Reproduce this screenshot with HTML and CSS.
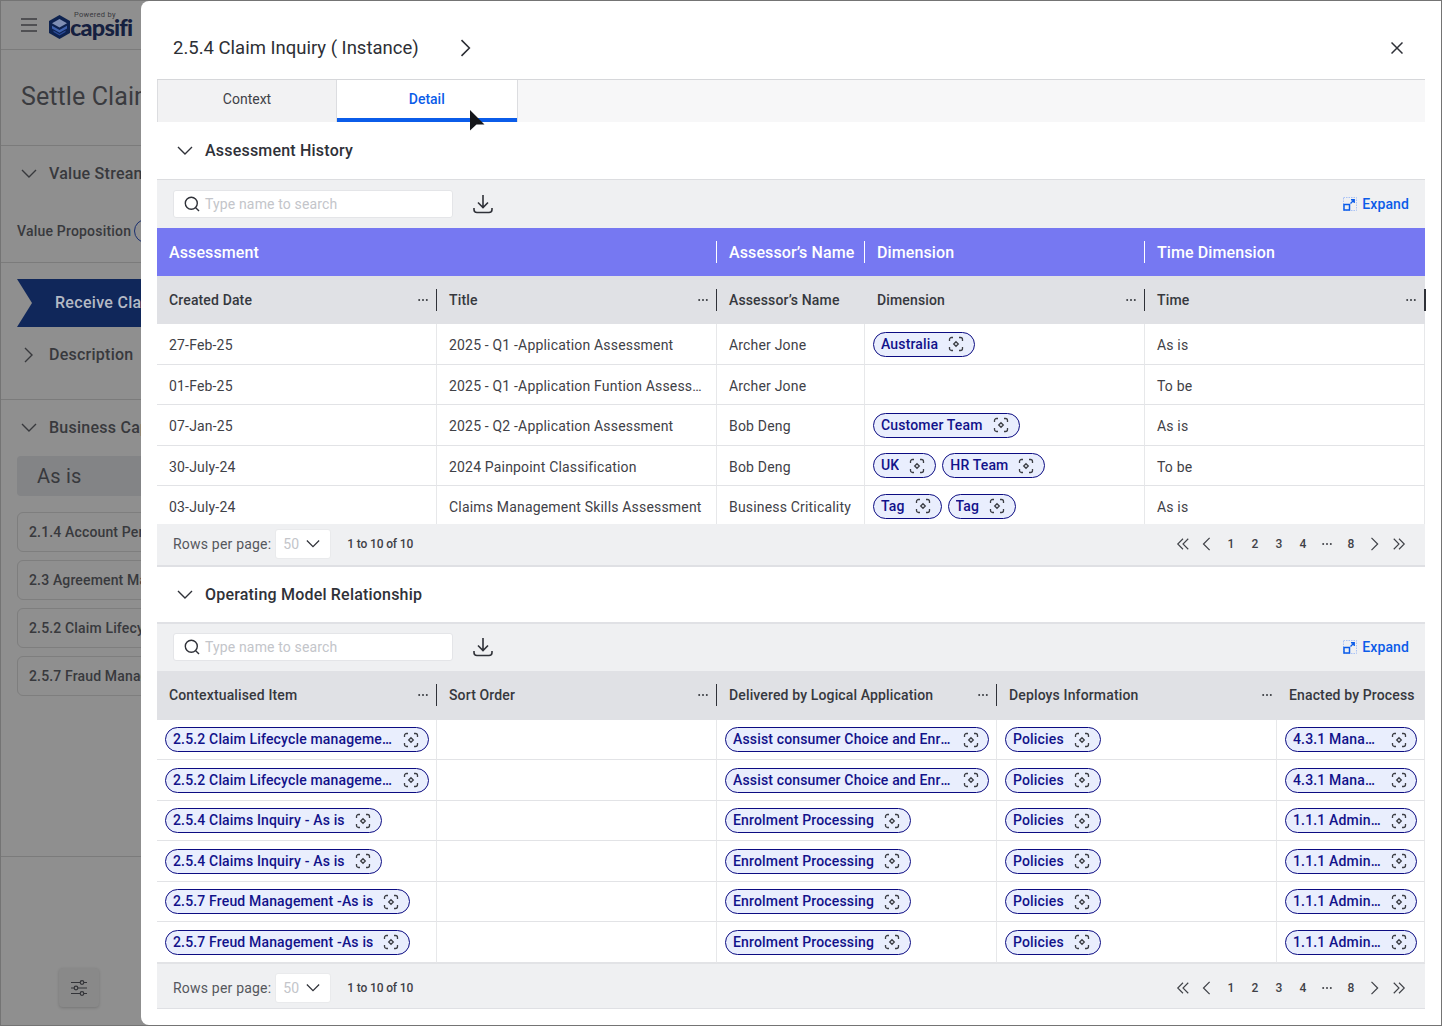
FILE: index.html
```html
<!DOCTYPE html>
<html lang="en">
<head>
<meta charset="utf-8">
<title>Settle Claims</title>
<link rel="stylesheet" href="styles.css">
</head>
<body>
<svg class="defs" width="0" height="0" aria-hidden="true">
  <defs>
    <symbol id="i-focus" viewBox="0 0 16 16"><path d="M1.5 5V3.5a2 2 0 0 1 2-2H5M11 1.5h1.500a2 2 0 0 1 2 2V5M14.500 11v1.500a2 2 0 0 1-2 2H11M5 14.500H3.500a2 2 0 0 1-2-2V11" fill="none" stroke="currentColor" stroke-width="1.300"/><path d="M8 5.700 10.300 8 8 10.300 5.700 8Z" fill="none" stroke="currentColor" stroke-width="1.300"/></symbol>
    <symbol id="i-down" viewBox="0 0 16 16"><path d="M1 4l7 7 7-7" fill="none" stroke="currentColor" stroke-width="1.400"/></symbol>
    <symbol id="i-right" viewBox="0 0 16 16"><path d="M4 1l7 7-7 7" fill="none" stroke="currentColor" stroke-width="1.400"/></symbol>
    <symbol id="i-left" viewBox="0 0 16 16"><path d="M11 1L4 8l7 7" fill="none" stroke="currentColor" stroke-width="1.400"/></symbol>
    <symbol id="i-first" viewBox="0 0 16 16"><path d="M8 2L2 8l6 6M14 2L8 8l6 6" fill="none" stroke="currentColor" stroke-width="1.300"/></symbol>
    <symbol id="i-last" viewBox="0 0 16 16"><path d="M2 2l6 6-6 6M8 2l6 6-6 6" fill="none" stroke="currentColor" stroke-width="1.300"/></symbol>
    <symbol id="i-dots" viewBox="0 0 10 4"><circle cx="1.200" cy="2" r="1" fill="currentColor"/><circle cx="5" cy="2" r="1" fill="currentColor"/><circle cx="8.800" cy="2" r="1" fill="currentColor"/></symbol>
    <symbol id="i-search" viewBox="0 0 16 16"><circle cx="7.300" cy="7.300" r="6" fill="none" stroke="currentColor" stroke-width="1.400"/><path d="M11.700 11.700l3.300 3.300" stroke="currentColor" stroke-width="1.400"/></symbol>
    <symbol id="i-download" viewBox="0 0 20 20"><path d="M10 1v12.500M5 8.500l5 5 5-5" fill="none" stroke="currentColor" stroke-width="1.600"/><path d="M1 14v1.500a3 3 0 0 0 3 3h12a3 3 0 0 0 3-3V14" fill="none" stroke="currentColor" stroke-width="1.600"/></symbol>
    <symbol id="i-expand" viewBox="0 0 14 14"><rect x=".5" y=".5" width="13" height="13" fill="none" stroke="#a9c2f6" stroke-dasharray="1.500 1"/><rect x="1" y="7.500" width="5.500" height="5.500" fill="#eff0f2" stroke="currentColor" stroke-width="1.500"/><path d="M7.500 6.500l3.500-3.500M8 2.800h3.200V6" fill="none" stroke="currentColor" stroke-width="1.400"/></symbol>
  </defs>
</svg>

<aside class="page">
  <header class="topbar">
    <svg class="burger" viewBox="0 0 16 14" width="16" height="14"><path d="M0 1h16M0 7h16M0 13h16" stroke="#3c3d40" stroke-width="1.400"/></svg>
    <svg class="logo-mark" viewBox="0 0 21 24" width="21" height="24"><path d="M10.500 0 21 6v12l-10.500 6L0 18V6Z" fill="#0e2350"/><path d="M10.500 4 18 8.300l-7.500 4.300L3 8.300Z" fill="#7f8fb4"/><path d="M3 10.800l7.500 4.300 7.500-4.300v2.600l-7.500 4.300L3 13.400Z" fill="#3f62ad"/><path d="M4.500 15.500l6 3.500 6-3.500v1.500l-6 3.500-6-3.500Z" fill="#2a4a97"/></svg>
    <div class="logo-text">
      <span class="logo-small">Powered by</span>
      <span class="logo-name">capsifi</span>
    </div>
  </header>
  <section class="pg-title">Settle Claims</section>
  <section class="pg-value">
    <div class="pg-head"><svg class="pg-chev" width="16" height="16"><use href="#i-down"/></svg>Value Stream</div>
    <div class="pg-prop">Value Proposition<span class="pg-ring">Faster claims</span></div>
  </section>
  <section class="pg-stage">
    <div class="pg-arrow">Receive Claim</div>
    <div class="pg-head pg-desc"><svg class="pg-chev" width="16" height="16"><use href="#i-right"/></svg>Description</div>
  </section>
  <section class="pg-biz">
    <div class="pg-head"><svg class="pg-chev" width="16" height="16"><use href="#i-down"/></svg>Business Capability</div>
    <div class="pg-asis">As is</div>
    <div class="pg-card">2.1.4 Account Performance</div>
    <div class="pg-card">2.3 Agreement Management</div>
    <div class="pg-card">2.5.2 Claim Lifecycle</div>
    <div class="pg-card">2.5.7 Fraud Management</div>
  </section>
  <section class="pg-foot">
    <button class="pg-filter" type="button" aria-label="Filters">
      <svg viewBox="0 0 16 16" width="16" height="16"><path d="M0 2.500h16M0 8h16M0 13.500h16" stroke="#333438" stroke-width="1.200"/><circle cx="11" cy="2.500" r="1.800" fill="#898989" stroke="#333438" stroke-width="1.200"/><circle cx="5" cy="8" r="1.800" fill="#898989" stroke="#333438" stroke-width="1.200"/><circle cx="11" cy="13.500" r="1.800" fill="#898989" stroke="#333438" stroke-width="1.200"/></svg>
    </button>
  </section>
</aside>

<main class="modal">
  <header class="modal-head">
    <h1 class="modal-title">2.5.4 Claim Inquiry ( Instance)</h1>
    <svg class="title-chev" width="18" height="18"><use href="#i-right"/></svg>
    <svg class="close" viewBox="0 0 12 12" width="12" height="12"><path d="M.5.500l11 11M11.500.500l-11 11" stroke="#2f3138" stroke-width="1.500"/></svg>
  </header>

  <nav class="tabs">
    <div class="tab">Context</div>
    <div class="tab tab-on">Detail</div>
  </nav>

  <div class="sec-head sec-first"><svg width="16" height="16"><use href="#i-down"/></svg>Assessment History</div>

  <div class="toolbar">
    <div class="search"><svg width="16" height="16"><use href="#i-search"/></svg><span>Type name to search</span></div>
    <svg class="dl" width="20" height="20"><use href="#i-download"/></svg>
    <a class="expand"><svg width="14" height="14"><use href="#i-expand"/></svg>Expand</a>
  </div>

  <div class="band">
    <div class="b-cell"><span>Assessment</span><i class="sep"></i></div>
    <div class="b-cell"><span>Assessor’s Name</span><i class="sep"></i></div>
    <div class="b-cell"><span>Dimension</span><i class="sep"></i></div>
    <div class="b-cell"><span>Time Dimension</span></div>
  </div>

  <div class="thead cols-a">
    <div class="h-cell"><span>Created Date</span><svg class="dots" width="10" height="4"><use href="#i-dots"/></svg><i class="sep"></i></div>
    <div class="h-cell"><span>Title</span><svg class="dots" width="10" height="4"><use href="#i-dots"/></svg><i class="sep"></i></div>
    <div class="h-cell"><span>Assessor’s Name</span></div>
    <div class="h-cell"><span>Dimension</span><svg class="dots" width="10" height="4"><use href="#i-dots"/></svg><i class="sep"></i></div>
    <div class="h-cell"><span>Time</span><svg class="dots" width="10" height="4"><use href="#i-dots"/></svg><i class="sep sep-end"></i></div>
  </div>

  <div class="tbody tbody-a">
    <div class="row cols-a">
      <div class="cell">27-Feb-25</div>
      <div class="cell">2025 - Q1 -Application Assessment</div>
      <div class="cell">Archer Jone</div>
      <div class="cell cell-chips"><span class="chip"><b>Australia</b><svg width="16" height="16"><use href="#i-focus"/></svg></span></div>
      <div class="cell">As is</div>
    </div>
    <div class="row cols-a">
      <div class="cell">01-Feb-25</div>
      <div class="cell">2025 - Q1 -Application Funtion Assessment Report</div>
      <div class="cell">Archer Jone</div>
      <div class="cell cell-chips"></div>
      <div class="cell">To be</div>
    </div>
    <div class="row cols-a">
      <div class="cell">07-Jan-25</div>
      <div class="cell">2025 - Q2 -Application Assessment</div>
      <div class="cell">Bob Deng</div>
      <div class="cell cell-chips"><span class="chip"><b>Customer Team</b><svg width="16" height="16"><use href="#i-focus"/></svg></span></div>
      <div class="cell">As is</div>
    </div>
    <div class="row cols-a">
      <div class="cell">30-July-24</div>
      <div class="cell">2024 Painpoint Classification</div>
      <div class="cell">Bob Deng</div>
      <div class="cell cell-chips"><span class="chip"><b>UK</b><svg width="16" height="16"><use href="#i-focus"/></svg></span><span class="chip"><b>HR Team</b><svg width="16" height="16"><use href="#i-focus"/></svg></span></div>
      <div class="cell">To be</div>
    </div>
    <div class="row cols-a">
      <div class="cell">03-July-24</div>
      <div class="cell">Claims Management Skills Assessment</div>
      <div class="cell">Business Criticality</div>
      <div class="cell cell-chips"><span class="chip"><b>Tag</b><svg width="16" height="16"><use href="#i-focus"/></svg></span><span class="chip"><b>Tag</b><svg width="16" height="16"><use href="#i-focus"/></svg></span></div>
      <div class="cell">As is</div>
    </div>
  </div>

  <div class="pager pager-a">
    <span class="rpp">Rows per page:</span>
    <div class="select"><span>50</span><svg width="14" height="14"><use href="#i-down"/></svg></div>
    <span class="range">1 to 10 of 10</span>
    <div class="pages">
      <span><svg width="14" height="14"><use href="#i-first"/></svg></span>
      <span><svg width="14" height="14"><use href="#i-left"/></svg></span>
      <span>1</span><span>2</span><span>3</span><span>4</span>
      <span><svg width="10" height="4"><use href="#i-dots"/></svg></span>
      <span>8</span>
      <span><svg width="14" height="14"><use href="#i-right"/></svg></span>
      <span><svg width="14" height="14"><use href="#i-last"/></svg></span>
    </div>
  </div>

  <div class="sec-head sec-second"><svg width="16" height="16"><use href="#i-down"/></svg>Operating Model Relationship</div>

  <div class="toolbar toolbar-b">
    <div class="search"><svg width="16" height="16"><use href="#i-search"/></svg><span>Type name to search</span></div>
    <svg class="dl" width="20" height="20"><use href="#i-download"/></svg>
    <a class="expand"><svg width="14" height="14"><use href="#i-expand"/></svg>Expand</a>
  </div>

  <div class="thead thead-b cols-b">
    <div class="h-cell"><span>Contextualised Item</span><svg class="dots" width="10" height="4"><use href="#i-dots"/></svg><i class="sep"></i></div>
    <div class="h-cell"><span>Sort Order</span><svg class="dots" width="10" height="4"><use href="#i-dots"/></svg><i class="sep"></i></div>
    <div class="h-cell"><span>Delivered by Logical Application</span><svg class="dots" width="10" height="4"><use href="#i-dots"/></svg><i class="sep"></i></div>
    <div class="h-cell"><span>Deploys Information</span><svg class="dots" width="10" height="4"><use href="#i-dots"/></svg></div>
    <div class="h-cell"><span>Enacted by Process</span></div>
  </div>

  <div class="tbody">
    <div class="row cols-b">
      <div class="cell cell-chips"><span class="chip chip-fill"><b>2.5.2 Claim Lifecycle management</b><svg width="16" height="16"><use href="#i-focus"/></svg></span></div>
      <div class="cell"></div>
      <div class="cell cell-chips"><span class="chip chip-fill"><b>Assist consumer Choice and Enrolment</b><svg width="16" height="16"><use href="#i-focus"/></svg></span></div>
      <div class="cell cell-chips"><span class="chip"><b>Policies</b><svg width="16" height="16"><use href="#i-focus"/></svg></span></div>
      <div class="cell cell-chips"><span class="chip chip-fill"><b>4.3.1 Manage Claims</b><svg width="16" height="16"><use href="#i-focus"/></svg></span></div>
    </div>
    <div class="row cols-b">
      <div class="cell cell-chips"><span class="chip chip-fill"><b>2.5.2 Claim Lifecycle management</b><svg width="16" height="16"><use href="#i-focus"/></svg></span></div>
      <div class="cell"></div>
      <div class="cell cell-chips"><span class="chip chip-fill"><b>Assist consumer Choice and Enrolment</b><svg width="16" height="16"><use href="#i-focus"/></svg></span></div>
      <div class="cell cell-chips"><span class="chip"><b>Policies</b><svg width="16" height="16"><use href="#i-focus"/></svg></span></div>
      <div class="cell cell-chips"><span class="chip chip-fill"><b>4.3.1 Manage Claims</b><svg width="16" height="16"><use href="#i-focus"/></svg></span></div>
    </div>
    <div class="row cols-b">
      <div class="cell cell-chips"><span class="chip"><b>2.5.4 Claims Inquiry - As is</b><svg width="16" height="16"><use href="#i-focus"/></svg></span></div>
      <div class="cell"></div>
      <div class="cell cell-chips"><span class="chip"><b>Enrolment Processing</b><svg width="16" height="16"><use href="#i-focus"/></svg></span></div>
      <div class="cell cell-chips"><span class="chip"><b>Policies</b><svg width="16" height="16"><use href="#i-focus"/></svg></span></div>
      <div class="cell cell-chips"><span class="chip chip-fill"><b>1.1.1 Administer Claims</b><svg width="16" height="16"><use href="#i-focus"/></svg></span></div>
    </div>
    <div class="row cols-b">
      <div class="cell cell-chips"><span class="chip"><b>2.5.4 Claims Inquiry - As is</b><svg width="16" height="16"><use href="#i-focus"/></svg></span></div>
      <div class="cell"></div>
      <div class="cell cell-chips"><span class="chip"><b>Enrolment Processing</b><svg width="16" height="16"><use href="#i-focus"/></svg></span></div>
      <div class="cell cell-chips"><span class="chip"><b>Policies</b><svg width="16" height="16"><use href="#i-focus"/></svg></span></div>
      <div class="cell cell-chips"><span class="chip chip-fill"><b>1.1.1 Administer Claims</b><svg width="16" height="16"><use href="#i-focus"/></svg></span></div>
    </div>
    <div class="row cols-b">
      <div class="cell cell-chips"><span class="chip"><b>2.5.7 Freud Management -As is</b><svg width="16" height="16"><use href="#i-focus"/></svg></span></div>
      <div class="cell"></div>
      <div class="cell cell-chips"><span class="chip"><b>Enrolment Processing</b><svg width="16" height="16"><use href="#i-focus"/></svg></span></div>
      <div class="cell cell-chips"><span class="chip"><b>Policies</b><svg width="16" height="16"><use href="#i-focus"/></svg></span></div>
      <div class="cell cell-chips"><span class="chip chip-fill"><b>1.1.1 Administer Claims</b><svg width="16" height="16"><use href="#i-focus"/></svg></span></div>
    </div>
    <div class="row cols-b">
      <div class="cell cell-chips"><span class="chip"><b>2.5.7 Freud Management -As is</b><svg width="16" height="16"><use href="#i-focus"/></svg></span></div>
      <div class="cell"></div>
      <div class="cell cell-chips"><span class="chip"><b>Enrolment Processing</b><svg width="16" height="16"><use href="#i-focus"/></svg></span></div>
      <div class="cell cell-chips"><span class="chip"><b>Policies</b><svg width="16" height="16"><use href="#i-focus"/></svg></span></div>
      <div class="cell cell-chips"><span class="chip chip-fill"><b>1.1.1 Administer Claims</b><svg width="16" height="16"><use href="#i-focus"/></svg></span></div>
    </div>
  </div>

  <div class="pager pager-b">
    <span class="rpp">Rows per page:</span>
    <div class="select"><span>50</span><svg width="14" height="14"><use href="#i-down"/></svg></div>
    <span class="range">1 to 10 of 10</span>
    <div class="pages">
      <span><svg width="14" height="14"><use href="#i-first"/></svg></span>
      <span><svg width="14" height="14"><use href="#i-left"/></svg></span>
      <span>1</span><span>2</span><span>3</span><span>4</span>
      <span><svg width="10" height="4"><use href="#i-dots"/></svg></span>
      <span>8</span>
      <span><svg width="14" height="14"><use href="#i-right"/></svg></span>
      <span><svg width="14" height="14"><use href="#i-last"/></svg></span>
    </div>
  </div>

  <svg class="cursor" viewBox="0 0 15 21" width="15" height="21"><path d="M0 0l14.500 14.500H6.500L0 20.500Z" fill="#15161a"/></svg>
</main>
</body>
</html>
```
FILE: styles.css
```css
* { box-sizing: border-box; }
html, body { margin: 0; height: 100%; }
body {
  position: relative;
  width: 1442px;
  height: 1026px;
  overflow: hidden;
  border: 1px solid #747474;
  background: #8f8f8f;
  font-family: Roboto, "Liberation Sans", sans-serif;
  font-size: 14px;
  color: #3f4147;
}
.defs { position: absolute; }

/* dimmed page behind the modal */
.page { white-space: nowrap; color: #38393d; }
.page section, .topbar { border-bottom: 1px solid #7b7b7b; }
.topbar { height: 49px; display: flex; align-items: center; padding-left: 20px; }
.burger { margin-right: 12px; }
.logo-mark { margin-top: 3px; }
.logo-text { display: flex; flex-direction: column; margin-top: -1px; }
.logo-small { font-size: 7.500px; line-height: 7px; margin-left: 4px; letter-spacing: .3px; }
.logo-name { margin-top: -2px; font-family: Lato, sans-serif; font-weight: 900; font-size: 23.500px; line-height: 23px; letter-spacing: -.8px; color: #15203f; }
.pg-title { height: 96px; padding: 31px 0 0 20px; font-size: 25px; line-height: 32px; letter-spacing: .1px; color: #3a3b3f; }
.pg-value { height: 117px; padding-top: 18px; }
.pg-head { display: flex; align-items: center; gap: 12px; padding-left: 20px; font-size: 16px; font-weight: 500; line-height: 20px; letter-spacing: .25px; }
.pg-chev { flex: none; color: #38393d; }
.pg-prop { display: flex; align-items: center; gap: 3px; margin-top: 35px; padding-left: 16px; font-weight: 500; font-size: 14px; line-height: 24px; letter-spacing: .2px; }
.pg-ring { height: 24px; padding: 0 12px; border: 1px solid #1a2f70; border-radius: 12px; }
.pg-stage { height: 137px; padding-top: 16px; }
.pg-arrow {
  width: 160px; height: 48px; margin-left: 16px; padding-left: 38px;
  background: #10275a; color: #b4b9c4; font-size: 16px; font-weight: 500; line-height: 48px; letter-spacing: .3px;
  clip-path: polygon(0 0, 100% 0, 100% 100%, 0 100%, 15px 50%);
}
.pg-desc { margin-top: 18px; }
.pg-biz { height: 457px; padding-top: 18px; }
.pg-asis { width: 160px; height: 40px; margin: 18px 0 16px 16px; padding-left: 20px; border-radius: 4px; background: #838486; font-size: 20px; line-height: 40px; letter-spacing: .2px; }
.pg-card { width: 160px; height: 40px; margin: 0 0 8px 16px; padding-left: 11px; border: 1px solid #7e7e7e; border-radius: 6px; font-weight: 500; line-height: 38px; letter-spacing: .15px; }
.page .pg-foot { border: 0; padding: 111px 0 0 58px; }
.pg-filter { display: flex; align-items: center; justify-content: center; width: 40px; height: 39px; padding: 0; border: 0; border-radius: 4px; background: #898989; box-shadow: 0 1px 3px rgba(0,0,0,.18); }

/* modal */
.modal {
  position: absolute; top: 0; left: 140px; right: 0; bottom: 0;
  padding: 0 16px;
  background: #fff;
  border-radius: 8px 0 0 8px;
  overflow: hidden;
}
.modal-head { height: 78px; display: flex; align-items: center; padding: 16px 22px 0 16px; }
.modal-title { margin: 0; font-size: 18.500px; font-weight: 400; line-height: 28px; color: #2d2f35; }
.title-chev { margin-left: 38px; color: #2d2f35; }
.close { margin-left: auto; }

.tabs { display: flex; height: 43px; background: #f7f7f8; border-top: 1px solid #d6d7da; }
.tab { width: 179px; height: 42px; text-align: center; line-height: 38px; background: #f2f2f3; border-left: 1px solid #dcdde0; color: #3f4147; }
.tab-on { width: 181.500px; background: #fff; color: #0b5ce9; font-weight: 500; border-right: 1px solid #dcdde0; box-shadow: inset 0 -4px 0 #0b5ce9; }

.sec-head { display: flex; align-items: center; gap: 12px; padding-left: 20px; font-size: 16px; font-weight: 500; color: #2f3138; letter-spacing: .2px; background: #fff; }
.sec-first { height: 58px; border-bottom: 1px solid #dcdde0; }
.sec-second { height: 57px; border-bottom: 2px solid #e0e1e5; }

.toolbar { display: flex; align-items: center; height: 48px; padding: 0 16px; background: #eff0f2; }
.toolbar-b { height: 47px; padding-bottom: 1px; }
.search { display: flex; align-items: center; gap: 5px; width: 280px; height: 28px; padding-left: 10px; border: 1px solid #e4e5e8; border-radius: 3px; background: #fff; color: #c3c5ca; letter-spacing: .15px; }
.search svg { color: #2f3138; }
.dl { margin-left: 20px; color: #2f3138; }
.expand { display: flex; align-items: center; gap: 5px; margin-left: auto; color: #0b5ce9; font-weight: 500; letter-spacing: .12px; }

.cols-a { display: grid; grid-template-columns: 280px 280px 148px 280px 280px; }
.cols-b { display: grid; grid-template-columns: 280px 280px 280px 280px 148px; }
.band { display: grid; grid-template-columns: 560px 148px 280px 280px; height: 48px; background: #7678f2; color: #fff; font-size: 16px; font-weight: 500; letter-spacing: .1px; }
.b-cell, .h-cell { display: flex; align-items: center; padding-left: 12px; min-width: 0; white-space: nowrap; }
.b-cell > span, .h-cell > span { flex: 1; }
.sep { flex: none; width: 1px; height: 22px; background: #fff; }
.thead { height: 48px; background: #e0e1e5; font-weight: 500; color: #36383e; letter-spacing: .14px; }
.thead-b { height: 48.500px; padding-bottom: 1px; }
.thead .sep { background: #2f3138; }
.thead .sep-end { width: 2px; margin-right: -1px; }
.dots { flex: none; margin-right: 8px; color: #36383e; }
.dots:last-child { margin-right: 5px; }

.tbody-a { height: 200px; overflow: hidden; }
.row { height: 40.500px; }
.cell {
  padding: 1px 12px 0; min-width: 0;
  line-height: 40px; white-space: nowrap; overflow: hidden; text-overflow: ellipsis;
  border-right: 1px solid #e7e8ea; border-bottom: 1px solid #e2e3e6;
  letter-spacing: .18px;
}
.cell-chips { display: flex; align-items: center; gap: 6px; padding: 1px 7px 0 8px; }

.chip {
  display: inline-flex; align-items: center; gap: 10px; min-width: 0; height: 25px; padding: 0 10px 0 7px;
  border: 1px solid #0c0c82; border-radius: 13px; background: #e9eefd;
  line-height: 23px;
}
.chip-fill { flex: 1; padding-right: 9px; }
.chip b { min-width: 0; flex: 1; overflow: hidden; text-overflow: ellipsis; font-weight: 500; color: #12128a; letter-spacing: .16px; }
.chip svg { flex: none; color: #3c3e44; }

.pager { display: flex; align-items: center; padding-left: 16px; background: #eff0f2; border-bottom: 2px solid #dfe0e4; }
.pager-a { height: 43px; padding-bottom: 1px; }
.pager-b { height: 46.500px; padding-top: 4px; border-bottom-width: 1px; border-top: 1px solid #e2e3e6; }
.rpp { color: #55575d; letter-spacing: .2px; }
.select { display: flex; align-items: center; justify-content: space-between; width: 56px; height: 30px; margin-left: 4px; padding: 0 10px 0 7px; border: 1px solid #e9eaec; border-radius: 3px; background: #fff; color: #c3c5ca; }
.select svg { color: #2f3138; }
.range { margin-left: 16px; font-size: 12px; font-weight: 500; color: #3f4147; letter-spacing: -.15px; }
.pages { display: flex; margin-left: auto; padding-right: 14px; font-size: 12px; font-weight: 500; color: #3f4147; }
.pages span { display: flex; align-items: center; justify-content: center; width: 24px; }

.cursor { position: absolute; left: 329px; top: 109px; }
```
